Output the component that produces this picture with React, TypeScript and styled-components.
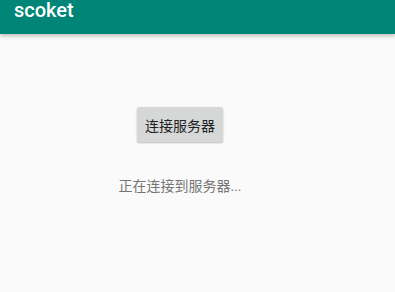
import styled, { createGlobalStyle } from "styled-components";

const GlobalStyle = createGlobalStyle`
  html, body {
    margin: 0;
    padding: 0;
    background: #fafafa;
  }
  body {
    font-family: Roboto, "Noto Sans CJK SC", sans-serif;
  }
`;

const App = () => {
  return (
    <Screen>
      <GlobalStyle />
      <Toolbar>
        <Title>scoket</Title>
      </Toolbar>
      <Content>
        <ConnectButton type="button">连接服务器</ConnectButton>
        <StatusText>正在连接到服务器...</StatusText>
      </Content>
    </Screen>
  );
};

const Screen = styled.div`
  width: 395px;
  height: 292px;
  overflow: hidden;
  background: #fafafa;
`;

const Toolbar = styled.header`
  height: 34px;
  background: #008577;
  display: flex;
  align-items: flex-end;
  padding: 0 14px;
  box-shadow: 0 2px 4px rgba(0, 0, 0, 0.25);
  position: relative;
`;

const Title = styled.h1`
  margin: 0 0 14px;
  color: #ffffff;
  font-size: 20px;
  font-weight: 500;
  line-height: 20px;
`;

const Content = styled.main`
  width: 360px;
  display: flex;
  flex-direction: column;
  align-items: center;
  padding-top: 73px;
`;

const ConnectButton = styled.button`
  height: 35px;
  padding: 0 8px;
  border: none;
  border-radius: 2px;
  background: #d6d7d7;
  color: #222222;
  font-family: Roboto, "Noto Sans CJK SC", sans-serif;
  font-size: 14px;
  box-shadow: 0 1px 2px rgba(0, 0, 0, 0.25);
`;

const StatusText = styled.p`
  margin: 36px 0 0;
  color: #757575;
  font-size: 14px;
  line-height: 16px;
`;

export default App;
